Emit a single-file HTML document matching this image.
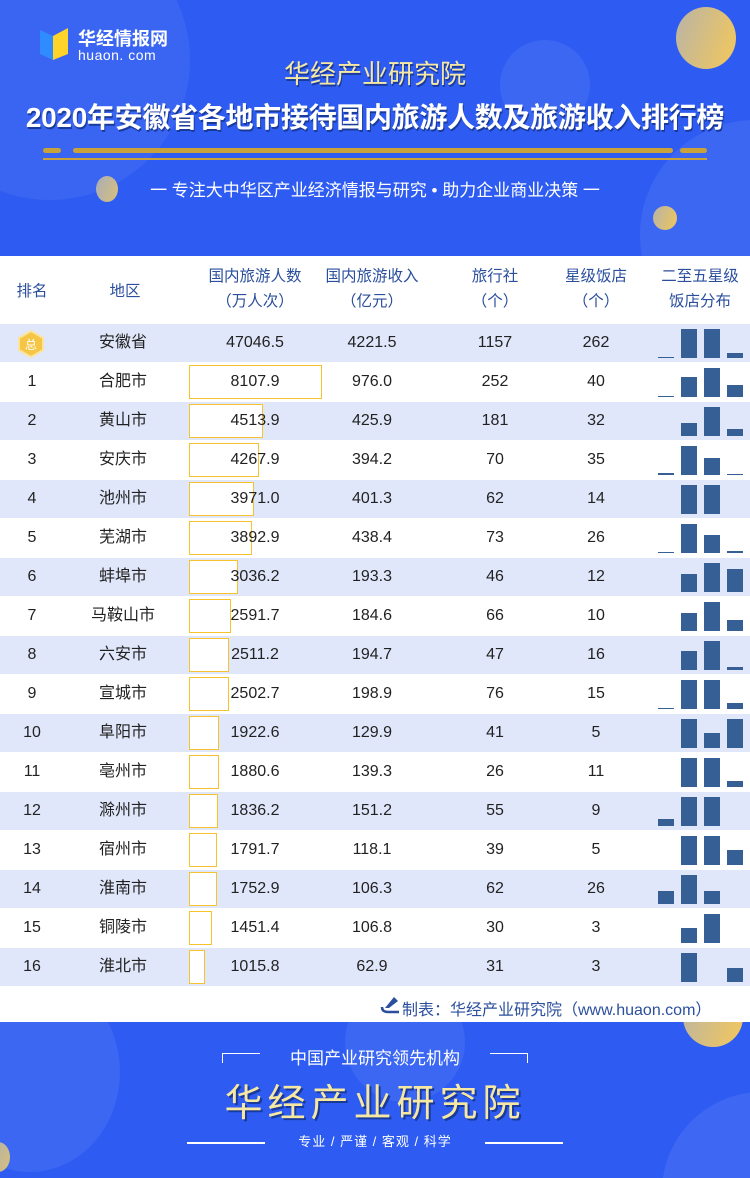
<!DOCTYPE html>
<html><head><meta charset="utf-8"><style>
*{margin:0;padding:0;box-sizing:border-box}
html,body{width:750px;height:1178px;overflow:hidden}
body{position:relative;background:#fff;font-family:"Liberation Sans","Noto Sans CJK SC",sans-serif}
.hdr{position:absolute;left:0;top:0;width:750px;height:256px;background:#2e5cf2;overflow:hidden}
.ftr{position:absolute;left:0;top:1022px;width:750px;height:156px;background:#2e5cf2;overflow:hidden}
.c{position:absolute;border-radius:50%}
.t{position:absolute;white-space:nowrap}
.row{position:absolute;left:0;width:750px;height:38px}
.row.b{background:#e1e7fb}
.row span{position:absolute;top:0;line-height:38px;font-size:16px;color:#222;text-align:center}
.r{left:2px;width:60px}.g{left:80px;width:86px}.v{left:200px;width:110px}.i{left:322px;width:100px}.a{left:455px;width:80px}.h{left:556px;width:80px}
.box{position:absolute;left:189px;top:2px;height:34px;border:1.5px solid #f6c22e;background:#fff}
.bar{position:absolute;bottom:4px;width:16px;background:#365f95}
.th{position:absolute;top:264px;color:#2b4f9d;font-size:15.5px;text-align:center;line-height:25px}
</style></head><body>
<div class="hdr">
 <div class="c" style="left:-90px;top:-80px;width:280px;height:280px;background:rgba(255,255,255,.06)"></div>
 <div class="c" style="left:500px;top:40px;width:90px;height:90px;background:rgba(255,255,255,.07)"></div>
 <div class="c" style="left:640px;top:120px;width:230px;height:230px;background:rgba(255,255,255,.07)"></div>
 <div class="c" style="left:676px;top:7px;width:60px;height:62px;background:linear-gradient(110deg,#b9b4a6,#f4c85a)"></div>
 <div class="c" style="left:653px;top:206px;width:24px;height:24px;background:linear-gradient(110deg,#b7b3a8,#f0c65c)"></div>
 <div class="c" style="left:96px;top:176px;width:22px;height:26px;background:linear-gradient(110deg,#a9adb8,#d8c07a)"></div>
 <svg class="t" style="left:40px;top:26px" width="30" height="36"><polygon points="0,4 13,10 13,34 0,28" fill="#2f8cff"/><polygon points="13,10 28,2 28,28 13,34" fill="#ffd42a"/></svg>
 <div class="t" style="left:78px;top:25px;color:#fff;font-size:18px;font-weight:bold">华经情报网</div>
 <div class="t" style="left:78px;top:47px;color:#fff;font-size:14px;letter-spacing:.5px">huaon. com</div>
 <div class="t" style="left:0;width:750px;top:54px;text-align:center;color:#f6e8a2;font-size:26px;text-shadow:1px 2px 0 #1a3a9a">华经产业研究院</div>
 <div class="t" style="left:0;width:750px;top:96px;text-align:center;color:#fff;font-size:28px;font-weight:bold;letter-spacing:-.3px;text-shadow:1px 2px 0 #1a3a9a">2020年安徽省各地市接待国内旅游人数及旅游收入排行榜</div>
 <div class="t" style="left:43px;top:148px;width:18px;height:5px;border-radius:3px;background:#c9a33a"></div>
 <div class="t" style="left:73px;top:148px;width:600px;height:5px;border-radius:3px;background:#c9a33a"></div>
 <div class="t" style="left:680px;top:148px;width:27px;height:5px;border-radius:3px;background:#c9a33a"></div>
 <div class="t" style="left:43px;top:158px;width:664px;height:2px;background:#c9a33a"></div>
 <div class="t" style="left:0;width:750px;top:176px;text-align:center;color:#fff;font-size:17px">一 专注大中华区产业经济情报与研究 • 助力企业商业决策 一</div>
</div>

<div class="th" style="left:0;width:64px;top:279px">排名</div>
<div class="th" style="left:90px;width:70px;top:279px">地区</div>
<div class="th" style="left:195px;width:120px">国内旅游人数<br>（万人次）</div>
<div class="th" style="left:322px;width:100px">国内旅游收入<br>（亿元）</div>
<div class="th" style="left:455px;width:80px">旅行社<br>（个）</div>
<div class="th" style="left:556px;width:80px">星级饭店<br>（个）</div>
<div class="th" style="left:650px;width:100px">二至五星级<br>饭店分布</div>

<div class="row b" style="top:324px"><svg style="position:absolute;left:17px;top:6px" width="28" height="28"><polygon points="14,1 26,8 26,20 14,27 2,20 2,8" fill="#f5c545" stroke="#fbe39a" stroke-width="2"/><text x="14" y="19" font-size="12" fill="#fff" text-anchor="middle" font-family="Noto Sans CJK SC">总</text></svg><span class="g">安徽省</span><span class="v">47046.5</span><span class="i">4221.5</span><span class="a">1157</span><span class="h">262</span><i class="bar" style="left:658px;height:1px"></i><i class="bar" style="left:681px;height:29px"></i><i class="bar" style="left:704px;height:29px"></i><i class="bar" style="left:727px;height:5px"></i></div>
<div class="row" style="top:363px"><div class="box" style="width:133px"></div><span class="r">1</span><span class="g">合肥市</span><span class="v">8107.9</span><span class="i">976.0</span><span class="a">252</span><span class="h">40</span><i class="bar" style="left:658px;height:1px"></i><i class="bar" style="left:681px;height:20px"></i><i class="bar" style="left:704px;height:29px"></i><i class="bar" style="left:727px;height:12px"></i></div>
<div class="row b" style="top:402px"><div class="box" style="width:74px"></div><span class="r">2</span><span class="g">黄山市</span><span class="v">4513.9</span><span class="i">425.9</span><span class="a">181</span><span class="h">32</span><i class="bar" style="left:681px;height:13px"></i><i class="bar" style="left:704px;height:29px"></i><i class="bar" style="left:727px;height:7px"></i></div>
<div class="row" style="top:441px"><div class="box" style="width:70px"></div><span class="r">3</span><span class="g">安庆市</span><span class="v">4267.9</span><span class="i">394.2</span><span class="a">70</span><span class="h">35</span><i class="bar" style="left:658px;height:2px"></i><i class="bar" style="left:681px;height:29px"></i><i class="bar" style="left:704px;height:17px"></i><i class="bar" style="left:727px;height:1px"></i></div>
<div class="row b" style="top:480px"><div class="box" style="width:65px"></div><span class="r">4</span><span class="g">池州市</span><span class="v">3971.0</span><span class="i">401.3</span><span class="a">62</span><span class="h">14</span><i class="bar" style="left:681px;height:29px"></i><i class="bar" style="left:704px;height:29px"></i></div>
<div class="row" style="top:519px"><div class="box" style="width:63px"></div><span class="r">5</span><span class="g">芜湖市</span><span class="v">3892.9</span><span class="i">438.4</span><span class="a">73</span><span class="h">26</span><i class="bar" style="left:658px;height:1px"></i><i class="bar" style="left:681px;height:29px"></i><i class="bar" style="left:704px;height:18px"></i><i class="bar" style="left:727px;height:2px"></i></div>
<div class="row b" style="top:558px"><div class="box" style="width:49px"></div><span class="r">6</span><span class="g">蚌埠市</span><span class="v">3036.2</span><span class="i">193.3</span><span class="a">46</span><span class="h">12</span><i class="bar" style="left:681px;height:18px"></i><i class="bar" style="left:704px;height:29px"></i><i class="bar" style="left:727px;height:23px"></i></div>
<div class="row" style="top:597px"><div class="box" style="width:42px"></div><span class="r">7</span><span class="g">马鞍山市</span><span class="v">2591.7</span><span class="i">184.6</span><span class="a">66</span><span class="h">10</span><i class="bar" style="left:681px;height:18px"></i><i class="bar" style="left:704px;height:29px"></i><i class="bar" style="left:727px;height:11px"></i></div>
<div class="row b" style="top:636px"><div class="box" style="width:40px"></div><span class="r">8</span><span class="g">六安市</span><span class="v">2511.2</span><span class="i">194.7</span><span class="a">47</span><span class="h">16</span><i class="bar" style="left:681px;height:19px"></i><i class="bar" style="left:704px;height:29px"></i><i class="bar" style="left:727px;height:3px"></i></div>
<div class="row" style="top:675px"><div class="box" style="width:40px"></div><span class="r">9</span><span class="g">宣城市</span><span class="v">2502.7</span><span class="i">198.9</span><span class="a">76</span><span class="h">15</span><i class="bar" style="left:658px;height:1px"></i><i class="bar" style="left:681px;height:29px"></i><i class="bar" style="left:704px;height:29px"></i><i class="bar" style="left:727px;height:6px"></i></div>
<div class="row b" style="top:714px"><div class="box" style="width:30px"></div><span class="r">10</span><span class="g">阜阳市</span><span class="v">1922.6</span><span class="i">129.9</span><span class="a">41</span><span class="h">5</span><i class="bar" style="left:681px;height:29px"></i><i class="bar" style="left:704px;height:15px"></i><i class="bar" style="left:727px;height:29px"></i></div>
<div class="row" style="top:753px"><div class="box" style="width:30px"></div><span class="r">11</span><span class="g">亳州市</span><span class="v">1880.6</span><span class="i">139.3</span><span class="a">26</span><span class="h">11</span><i class="bar" style="left:681px;height:29px"></i><i class="bar" style="left:704px;height:29px"></i><i class="bar" style="left:727px;height:6px"></i></div>
<div class="row b" style="top:792px"><div class="box" style="width:29px"></div><span class="r">12</span><span class="g">滁州市</span><span class="v">1836.2</span><span class="i">151.2</span><span class="a">55</span><span class="h">9</span><i class="bar" style="left:658px;height:7px"></i><i class="bar" style="left:681px;height:29px"></i><i class="bar" style="left:704px;height:29px"></i></div>
<div class="row" style="top:831px"><div class="box" style="width:28px"></div><span class="r">13</span><span class="g">宿州市</span><span class="v">1791.7</span><span class="i">118.1</span><span class="a">39</span><span class="h">5</span><i class="bar" style="left:681px;height:29px"></i><i class="bar" style="left:704px;height:29px"></i><i class="bar" style="left:727px;height:15px"></i></div>
<div class="row b" style="top:870px"><div class="box" style="width:28px"></div><span class="r">14</span><span class="g">淮南市</span><span class="v">1752.9</span><span class="i">106.3</span><span class="a">62</span><span class="h">26</span><i class="bar" style="left:658px;height:13px"></i><i class="bar" style="left:681px;height:29px"></i><i class="bar" style="left:704px;height:13px"></i></div>
<div class="row" style="top:909px"><div class="box" style="width:23px"></div><span class="r">15</span><span class="g">铜陵市</span><span class="v">1451.4</span><span class="i">106.8</span><span class="a">30</span><span class="h">3</span><i class="bar" style="left:681px;height:15px"></i><i class="bar" style="left:704px;height:29px"></i></div>
<div class="row b" style="top:948px"><div class="box" style="width:16px"></div><span class="r">16</span><span class="g">淮北市</span><span class="v">1015.8</span><span class="i">62.9</span><span class="a">31</span><span class="h">3</span><i class="bar" style="left:681px;height:29px"></i><i class="bar" style="left:727px;height:14px"></i></div>

<svg class="t" style="left:380px;top:995px" width="22" height="20"><path d="M14 2 L18 6 L9 13 L5 13 Z" fill="#2b4f9d"/><path d="M2 12 Q2 17 8 17 L19 17" stroke="#2b4f9d" stroke-width="2.5" fill="none"/></svg>
<div class="t" style="left:402px;top:996px;font-size:16px;color:#2b4f9d">制表：华经产业研究院（www.huaon.com）</div>

<div class="ftr">
 <div class="c" style="left:-60px;top:-50px;width:180px;height:200px;background:rgba(255,255,255,.07)"></div>
 <div class="c" style="left:345px;top:-40px;width:120px;height:120px;background:rgba(255,255,255,.07)"></div>
 <div class="c" style="left:662px;top:70px;width:200px;height:200px;background:rgba(255,255,255,.08)"></div>
 <div class="c" style="left:683px;top:-35px;width:60px;height:60px;background:linear-gradient(110deg,#b9b4a6,#f4c85a)"></div>
 <div class="c" style="left:-14px;top:120px;width:24px;height:30px;background:linear-gradient(110deg,#a9adb8,#d8c07a)"></div>
 <div class="t" style="left:222px;top:31px;width:38px;height:10px;border-top:1.5px solid #fff;border-left:1.5px solid #fff"></div>
 <div class="t" style="left:0;width:750px;top:22px;text-align:center;color:#fff;font-size:17px">中国产业研究领先机构</div>
 <div class="t" style="left:490px;top:31px;width:38px;height:10px;border-top:1.5px solid #fff;border-right:1.5px solid #fff"></div>
 <div class="t" style="left:0;width:750px;top:50px;text-align:center;color:#f6e8a2;font-size:38px;letter-spacing:5px;text-shadow:2px 2px 0 #1a3a9a">华经产业研究院</div>
 <div class="t" style="left:187px;top:120px;width:78px;height:1.5px;background:#fff"></div>
 <div class="t" style="left:0;width:750px;top:109px;text-align:center;color:#fff;font-size:13px;letter-spacing:1px">专业 / 严谨 / 客观 / 科学</div>
 <div class="t" style="left:485px;top:120px;width:78px;height:1.5px;background:#fff"></div>
</div>
</body></html>
